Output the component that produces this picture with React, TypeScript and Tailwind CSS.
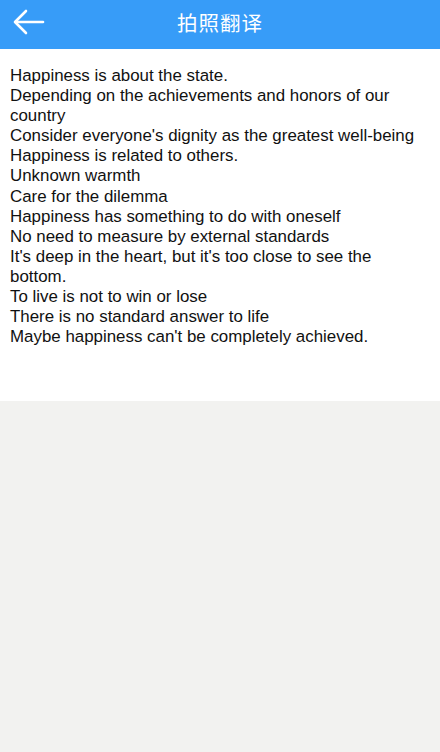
import React from "react"

const LINES = [
  "Happiness is about the state.",
  "Depending on the achievements and honors of our country",
  "Consider everyone's dignity as the greatest well-being",
  "Happiness is related to others.",
  "Unknown warmth",
  "Care for the dilemma",
  "Happiness has something to do with oneself",
  "No need to measure by external standards",
  "It's deep in the heart, but it's too close to see the bottom.",
  "To live is not to win or lose",
  "There is no standard answer to life",
  "Maybe happiness can't be completely achieved.",
]

export default function App() {
  return (
    <div className="min-h-[752px] bg-[#f2f2f0] font-['Liberation_Sans','Noto_Sans_CJK_SC',sans-serif]">
      <header className="relative h-[49px] bg-[#379cf8] flex items-center justify-center">
        <button className="absolute left-[12px] top-[8px] w-[34px] h-[28px] flex items-center justify-center">
          <svg width="32" height="26" viewBox="0 0 32 26" fill="none" stroke="white" strokeWidth="2.6" strokeLinecap="round" strokeLinejoin="round">
            <path d="M30 13H3" />
            <path d="M13 2L2 13l11 11" />
          </svg>
        </button>
        <h1 className="text-white text-[20.5px] tracking-[1px] font-['Noto_Sans_CJK_SC',sans-serif] -mt-[4px]">拍照翻译</h1>
      </header>
      <main className="bg-white pt-[17px] pb-[54px] px-[10px] text-[16.9px] leading-[20.1px] text-[#111]">
        {LINES.map((l, i) => (
          <p key={i}>{l}</p>
        ))}
      </main>
    </div>
  )
}
